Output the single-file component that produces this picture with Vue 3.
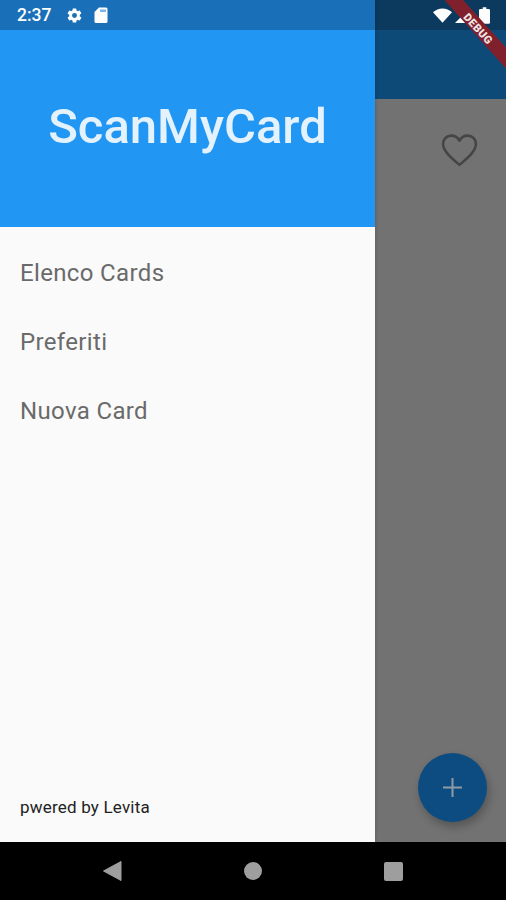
<template>
  <div class="phone">
    <div class="screen">
      <aside class="drawer">
        <div class="status status-left">
          <span class="time">2:37</span>
          <svg class="gear" viewBox="0 0 24 24" width="17" height="17">
            <path fill="#fff" d="M19.4 13c.04-.32.1-.66.1-1s-.06-.68-.1-1l2.1-1.65c.2-.15.25-.42.12-.64l-2-3.46c-.12-.22-.39-.3-.61-.22l-2.49 1c-.52-.4-1.08-.73-1.69-.98l-.38-2.65A.49.49 0 0 0 14 2h-4c-.25 0-.46.18-.49.42l-.38 2.65c-.61.25-1.17.59-1.69.98l-2.49-1c-.23-.09-.49 0-.61.22l-2 3.46c-.13.22-.07.49.12.64L4.57 11c-.04.32-.07.66-.07 1s.03.68.07 1l-2.11 1.65c-.19.15-.25.42-.12.64l2 3.46c.12.22.39.3.61.22l2.49-1c.52.4 1.08.73 1.69.98l.38 2.65c.03.24.24.42.49.42h4c.25 0 .46-.18.49-.42l.38-2.65c.61-.25 1.17-.59 1.69-.98l2.49 1c.23.09.49 0 .61-.22l2-3.46c.12-.22.07-.49-.12-.64L19.4 13zM12 15.5a3.5 3.5 0 1 1 0-7 3.5 3.5 0 0 1 0 7z" />
          </svg>
          <svg class="sd" viewBox="0 0 14 16" width="14" height="16">
            <path fill="#fff" d="M5 .5h7a1.500 1.500 0 0 1 1.500 1.500v12.500a1.500 1.500 0 0 1-1.500 1.500H2a1.500 1.500 0 0 1-1.500-1.500V5z" />
            <rect x="6" y="2.500" width="6" height="2.500" fill="#1976d2" opacity="0.55" />
          </svg>
        </div>
        <header class="drawer-header">
          <h1>ScanMyCard</h1>
        </header>
        <nav class="menu">
          <a v-for="item in menuItems" :key="item" class="menu-item">{{ item }}</a>
        </nav>
        <p class="credit">pwered by Levita</p>
      </aside>

      <main class="behind">
        <div class="status status-right">
          <svg class="wifi" viewBox="0 0 20 15" width="19" height="15">
            <path fill="#fff" d="M0 4C2.800 1.500 6.200 0 10 0s7.200 1.500 10 4L10 15z" />
          </svg>
          <svg class="signal" viewBox="0 0 15 15" width="15" height="15">
            <path fill="#fff" d="M15 0v15H0z" />
          </svg>
          <svg viewBox="0 0 12 18" width="11" height="17">
            <path fill="#fff" d="M4 0h4v2h2.500c.8 0 1.500.7 1.500 1.500V16.500c0 .8-.7 1.500-1.500 1.500h-9C.7 18 0 17.300 0 16.500V3.500C0 2.700.7 2 1.500 2H4z" />
          </svg>
        </div>
        <div class="appbar"></div>
        <div class="content">
          <svg class="heart" viewBox="0 0 36 32" width="37" height="33">
            <path fill="none" stroke="#454545" stroke-width="2.500" stroke-linejoin="round" d="M18 30C8 21.500 2 16 2 9.500 2 5 5.500 1.500 10 1.500c3.500 0 6.500 2 8 5 1.500-3 4.500-5 8-5 4.500 0 8 3.500 8 8C34 16 28 21.500 18 30z" />
          </svg>
          <button class="fab" type="button">
            <svg viewBox="0 0 19 19" width="19" height="19">
              <path fill="none" stroke="#8f9aa3" stroke-width="2" d="M9.500 0v19M0 9.500h19" />
            </svg>
          </button>
        </div>
        <div class="debug-banner"><span>DEBUG</span></div>
      </main>
    </div>

    <footer class="navbar">
      <svg viewBox="0 0 20 22" width="20" height="22">
        <path fill="#9e9e9e" stroke="#9e9e9e" stroke-linejoin="round" d="M19 1.500v19L1.500 11z" />
      </svg>
      <span class="nav-circle"></span>
      <span class="nav-square"></span>
    </footer>
  </div>
</template>

<script setup>
const menuItems = ['Elenco Cards', 'Preferiti', 'Nuova Card'];
</script>

<style scoped>
.phone {
  position: relative;
  width: 506px;
  height: 900px;
  overflow: hidden;
  display: flex;
  flex-direction: column;
  font-family: Roboto, "Liberation Sans", sans-serif;
  background: #000;
}

.screen {
  flex: 1;
  display: flex;
  min-height: 0;
}

.drawer {
  width: 375px;
  display: flex;
  flex-direction: column;
  background: #fafafa;
  z-index: 1;
  box-shadow: 1px 0 3px rgba(0, 0, 0, 0.15);
}

.status {
  height: 30px;
  display: flex;
  align-items: center;
  flex-shrink: 0;
}

.status-left {
  background: #1a70b8;
  padding-left: 17px;
  color: #fff;
}

.time {
  font-size: 17.5px;
  font-weight: 500;
  width: 49px;
}

.gear {
  margin-right: 11px;
}

.drawer-header {
  height: 197px;
  background: #2196f3;
  display: flex;
  align-items: center;
  justify-content: center;
  flex-shrink: 0;
}

.drawer-header h1 {
  margin: 0 0 4px;
  font-size: 49px;
  font-weight: 500;
  color: #e3f2fd;
}

.menu {
  display: flex;
  flex-direction: column;
  padding-top: 12px;
}

.menu-item {
  height: 69px;
  line-height: 69px;
  padding-left: 20px;
  font-size: 24px;
  letter-spacing: 0.35px;
  color: #6a6a6a;
}

.credit {
  margin: auto 0 0;
  padding: 0 0 26px 20px;
  font-size: 17px;
  letter-spacing: 0.2px;
  line-height: 18px;
  color: #222;
}

.behind {
  flex: 1;
  display: flex;
  flex-direction: column;
}

.status-right {
  background: #0b3a5e;
  justify-content: flex-end;
  padding-right: 16px;
}

.signal {
  margin: 0 9px 0 3px;
}

.appbar {
  height: 69px;
  background: #0d4a78;
}

.content {
  flex: 1;
  display: flex;
  flex-direction: column;
  align-items: flex-end;
  justify-content: space-between;
  background: #727272;
  padding: 35px 19px 20px 0;
}

.heart {
  margin-right: 9px;
}

.fab {
  width: 69px;
  height: 69px;
  border: none;
  padding: 0;
  border-radius: 50%;
  background: #0d4c80;
  display: flex;
  align-items: center;
  justify-content: center;
  box-shadow: 2px 5px 9px rgba(0, 0, 0, 0.25);
}

.debug-banner {
  position: absolute;
  top: 21px;
  right: -33px;
  width: 120px;
  height: 14px;
  line-height: 14px;
  text-align: center;
  background: #80202c;
  transform: rotate(48deg);
}

.debug-banner span {
  font-size: 11px;
  font-weight: 900;
  color: #f0e3e4;
  letter-spacing: 0.4px;
}

.navbar {
  height: 58px;
  flex-shrink: 0;
  display: flex;
  align-items: center;
  background: #000;
  padding: 0 0 0 102px;
  gap: 122px;
}

.nav-circle {
  width: 18px;
  height: 18px;
  border-radius: 50%;
  background: #9e9e9e;
}

.nav-square {
  width: 19px;
  height: 19px;
  border-radius: 2px;
  background: #9e9e9e;
}
</style>
